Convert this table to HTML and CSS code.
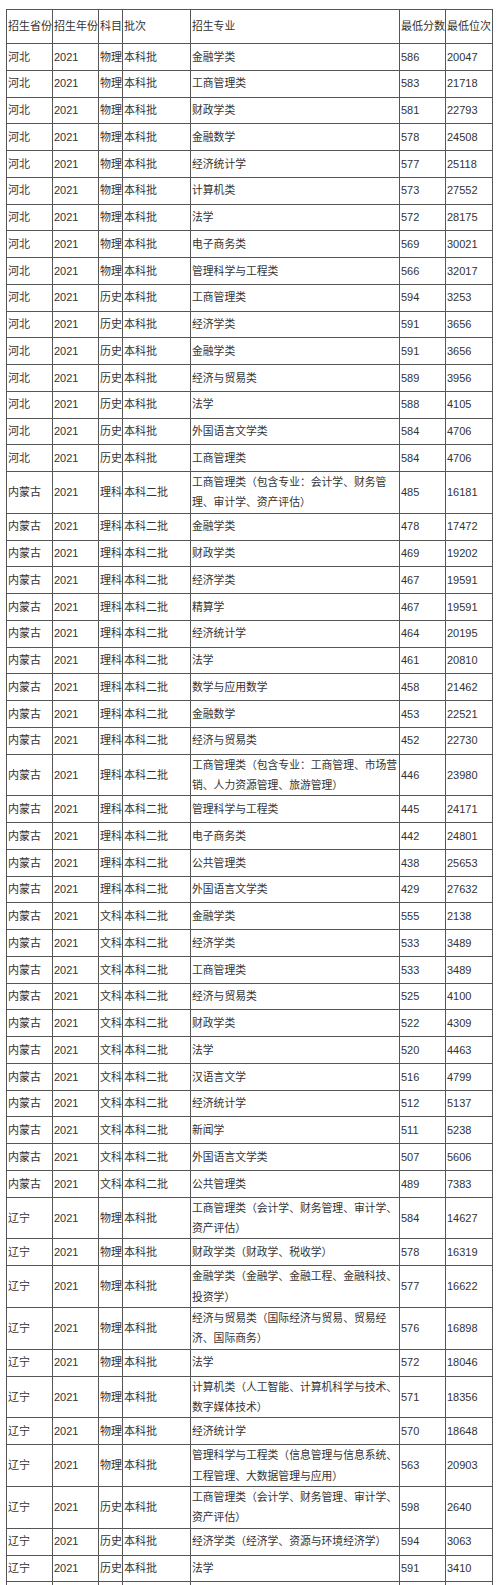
FILE: index.html
```html
<!DOCTYPE html>
<html lang="zh-CN">
<head>
<meta charset="utf-8">
<title>招生录取分数</title>
<link rel="stylesheet" href="styles.css">
</head>
<body>
<table class="scores">
<colgroup>
<col class="c-prov"><col class="c-year"><col class="c-subj"><col class="c-batch"><col class="c-major"><col class="c-score"><col class="c-rank">
</colgroup>
<tbody>
<tr class="head"><td>招生省份</td><td>招生年份</td><td>科目</td><td>批次</td><td>招生专业</td><td>最低分数</td><td>最低位次</td></tr>
<tr><td>河北</td><td>2021</td><td>物理</td><td>本科批</td><td>金融学类</td><td>586</td><td>20047</td></tr>
<tr><td>河北</td><td>2021</td><td>物理</td><td>本科批</td><td>工商管理类</td><td>583</td><td>21718</td></tr>
<tr><td>河北</td><td>2021</td><td>物理</td><td>本科批</td><td>财政学类</td><td>581</td><td>22793</td></tr>
<tr><td>河北</td><td>2021</td><td>物理</td><td>本科批</td><td>金融数学</td><td>578</td><td>24508</td></tr>
<tr><td>河北</td><td>2021</td><td>物理</td><td>本科批</td><td>经济统计学</td><td>577</td><td>25118</td></tr>
<tr><td>河北</td><td>2021</td><td>物理</td><td>本科批</td><td>计算机类</td><td>573</td><td>27552</td></tr>
<tr><td>河北</td><td>2021</td><td>物理</td><td>本科批</td><td>法学</td><td>572</td><td>28175</td></tr>
<tr><td>河北</td><td>2021</td><td>物理</td><td>本科批</td><td>电子商务类</td><td>569</td><td>30021</td></tr>
<tr><td>河北</td><td>2021</td><td>物理</td><td>本科批</td><td>管理科学与工程类</td><td>566</td><td>32017</td></tr>
<tr><td>河北</td><td>2021</td><td>历史</td><td>本科批</td><td>工商管理类</td><td>594</td><td>3253</td></tr>
<tr><td>河北</td><td>2021</td><td>历史</td><td>本科批</td><td>经济学类</td><td>591</td><td>3656</td></tr>
<tr><td>河北</td><td>2021</td><td>历史</td><td>本科批</td><td>金融学类</td><td>591</td><td>3656</td></tr>
<tr><td>河北</td><td>2021</td><td>历史</td><td>本科批</td><td>经济与贸易类</td><td>589</td><td>3956</td></tr>
<tr><td>河北</td><td>2021</td><td>历史</td><td>本科批</td><td>法学</td><td>588</td><td>4105</td></tr>
<tr><td>河北</td><td>2021</td><td>历史</td><td>本科批</td><td>外国语言文学类</td><td>584</td><td>4706</td></tr>
<tr><td>河北</td><td>2021</td><td>历史</td><td>本科批</td><td>工商管理类</td><td>584</td><td>4706</td></tr>
<tr><td>内蒙古</td><td>2021</td><td>理科</td><td>本科二批</td><td>工商管理类（包含专业：会计学、财务管理、审计学、资产评估）</td><td>485</td><td>16181</td></tr>
<tr><td>内蒙古</td><td>2021</td><td>理科</td><td>本科二批</td><td>金融学类</td><td>478</td><td>17472</td></tr>
<tr><td>内蒙古</td><td>2021</td><td>理科</td><td>本科二批</td><td>财政学类</td><td>469</td><td>19202</td></tr>
<tr><td>内蒙古</td><td>2021</td><td>理科</td><td>本科二批</td><td>经济学类</td><td>467</td><td>19591</td></tr>
<tr><td>内蒙古</td><td>2021</td><td>理科</td><td>本科二批</td><td>精算学</td><td>467</td><td>19591</td></tr>
<tr><td>内蒙古</td><td>2021</td><td>理科</td><td>本科二批</td><td>经济统计学</td><td>464</td><td>20195</td></tr>
<tr><td>内蒙古</td><td>2021</td><td>理科</td><td>本科二批</td><td>法学</td><td>461</td><td>20810</td></tr>
<tr><td>内蒙古</td><td>2021</td><td>理科</td><td>本科二批</td><td>数学与应用数学</td><td>458</td><td>21462</td></tr>
<tr><td>内蒙古</td><td>2021</td><td>理科</td><td>本科二批</td><td>金融数学</td><td>453</td><td>22521</td></tr>
<tr><td>内蒙古</td><td>2021</td><td>理科</td><td>本科二批</td><td>经济与贸易类</td><td>452</td><td>22730</td></tr>
<tr><td>内蒙古</td><td>2021</td><td>理科</td><td>本科二批</td><td>工商管理类（包含专业：工商管理、市场营销、人力资源管理、旅游管理）</td><td>446</td><td>23980</td></tr>
<tr><td>内蒙古</td><td>2021</td><td>理科</td><td>本科二批</td><td>管理科学与工程类</td><td>445</td><td>24171</td></tr>
<tr><td>内蒙古</td><td>2021</td><td>理科</td><td>本科二批</td><td>电子商务类</td><td>442</td><td>24801</td></tr>
<tr><td>内蒙古</td><td>2021</td><td>理科</td><td>本科二批</td><td>公共管理类</td><td>438</td><td>25653</td></tr>
<tr><td>内蒙古</td><td>2021</td><td>理科</td><td>本科二批</td><td>外国语言文学类</td><td>429</td><td>27632</td></tr>
<tr><td>内蒙古</td><td>2021</td><td>文科</td><td>本科二批</td><td>金融学类</td><td>555</td><td>2138</td></tr>
<tr><td>内蒙古</td><td>2021</td><td>文科</td><td>本科二批</td><td>经济学类</td><td>533</td><td>3489</td></tr>
<tr><td>内蒙古</td><td>2021</td><td>文科</td><td>本科二批</td><td>工商管理类</td><td>533</td><td>3489</td></tr>
<tr><td>内蒙古</td><td>2021</td><td>文科</td><td>本科二批</td><td>经济与贸易类</td><td>525</td><td>4100</td></tr>
<tr><td>内蒙古</td><td>2021</td><td>文科</td><td>本科二批</td><td>财政学类</td><td>522</td><td>4309</td></tr>
<tr><td>内蒙古</td><td>2021</td><td>文科</td><td>本科二批</td><td>法学</td><td>520</td><td>4463</td></tr>
<tr><td>内蒙古</td><td>2021</td><td>文科</td><td>本科二批</td><td>汉语言文学</td><td>516</td><td>4799</td></tr>
<tr><td>内蒙古</td><td>2021</td><td>文科</td><td>本科二批</td><td>经济统计学</td><td>512</td><td>5137</td></tr>
<tr><td>内蒙古</td><td>2021</td><td>文科</td><td>本科二批</td><td>新闻学</td><td>511</td><td>5238</td></tr>
<tr><td>内蒙古</td><td>2021</td><td>文科</td><td>本科二批</td><td>外国语言文学类</td><td>507</td><td>5606</td></tr>
<tr><td>内蒙古</td><td>2021</td><td>文科</td><td>本科二批</td><td>公共管理类</td><td>489</td><td>7383</td></tr>
<tr><td>辽宁</td><td>2021</td><td>物理</td><td>本科批</td><td>工商管理类（会计学、财务管理、审计学、资产评估）</td><td>584</td><td>14627</td></tr>
<tr><td>辽宁</td><td>2021</td><td>物理</td><td>本科批</td><td>财政学类（财政学、税收学）</td><td>578</td><td>16319</td></tr>
<tr><td>辽宁</td><td>2021</td><td>物理</td><td>本科批</td><td>金融学类（金融学、金融工程、金融科技、投资学）</td><td>577</td><td>16622</td></tr>
<tr><td>辽宁</td><td>2021</td><td>物理</td><td>本科批</td><td>经济与贸易类（国际经济与贸易、贸易经济、国际商务）</td><td>576</td><td>16898</td></tr>
<tr><td>辽宁</td><td>2021</td><td>物理</td><td>本科批</td><td>法学</td><td>572</td><td>18046</td></tr>
<tr><td>辽宁</td><td>2021</td><td>物理</td><td>本科批</td><td>计算机类（人工智能、计算机科学与技术、数字媒体技术）</td><td>571</td><td>18356</td></tr>
<tr><td>辽宁</td><td>2021</td><td>物理</td><td>本科批</td><td>经济统计学</td><td>570</td><td>18648</td></tr>
<tr><td>辽宁</td><td>2021</td><td>物理</td><td>本科批</td><td>管理科学与工程类（信息管理与信息系统、工程管理、大数据管理与应用）</td><td>563</td><td>20903</td></tr>
<tr><td>辽宁</td><td>2021</td><td>历史</td><td>本科批</td><td>工商管理类（会计学、财务管理、审计学、资产评估）</td><td>598</td><td>2640</td></tr>
<tr><td>辽宁</td><td>2021</td><td>历史</td><td>本科批</td><td>经济学类（经济学、资源与环境经济学）</td><td>594</td><td>3063</td></tr>
<tr><td>辽宁</td><td>2021</td><td>历史</td><td>本科批</td><td>法学</td><td>591</td><td>3410</td></tr>
<tr><td></td><td></td><td></td><td></td><td></td><td></td><td></td></tr>
</tbody>
</table>
</body>
</html>
```

FILE: styles.css
```css
html, body {
  margin: 0;
  padding: 0;
  background: #fff;
}

body {
  padding: 9px 0 0 6px;
  font-family: "Liberation Sans", "Noto Sans CJK SC", sans-serif;
  font-size: 11px;
  color: #333;
}

.scores {
  border-collapse: collapse;
  table-layout: fixed;
  width: 486px;
}

.scores td {
  border: 1px solid #555;
  padding: 0 0 0 1px;
  line-height: 20.4px;
  vertical-align: middle;
  text-align: left;
  white-space: nowrap;
  overflow: visible;
}

.scores td:nth-child(5) {
  white-space: normal;
  font-size: 10.8px;
}

.scores tr {
  height: 26.75px;
}

.scores tr.head {
  height: 34px;
}

.c-prov { width: 46px; }
.c-year { width: 46px; }
.c-subj { width: 24px; }
.c-batch { width: 68px; }
.c-major { width: 209px; }
.c-score { width: 46px; }
.c-rank { width: 47px; }
```
